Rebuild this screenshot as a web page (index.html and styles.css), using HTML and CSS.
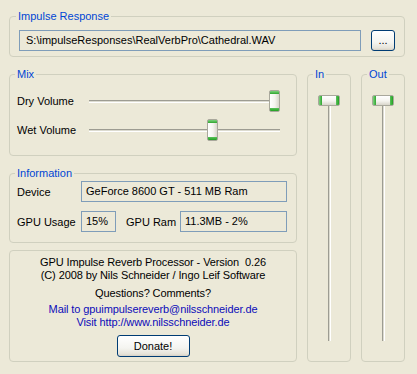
FILE: index.html
```html
<!DOCTYPE html>
<html lang="en">
<head>
    <meta charset="UTF-8">
    <title>GPU Impulse Reverb</title>
    <link rel="stylesheet" href="styles.css">
</head>
<body>
    <div class="window">
        <fieldset class="group ir">
            <legend>Impulse Response</legend>
            <div class="ir-row">
                <div class="field path">S:\impulseResponses\RealVerbPro\Cathedral.WAV</div>
                <button class="btn browse">...</button>
            </div>
        </fieldset>

        <div class="main">
            <div class="left">
                <fieldset class="group mix">
                    <legend>Mix</legend>
                    <div class="slider-row">
                        <span class="slider-label">Dry Volume</span>
                        <div class="hslider">
                            <div class="htrack"></div>
                            <div class="hthumb" style="left: 180px"></div>
                        </div>
                    </div>
                    <div class="slider-row">
                        <span class="slider-label">Wet Volume</span>
                        <div class="hslider">
                            <div class="htrack"></div>
                            <div class="hthumb" style="left: 118px"></div>
                        </div>
                    </div>
                </fieldset>

                <fieldset class="group info">
                    <legend>Information</legend>
                    <div class="info-row">
                        <span class="info-label">Device</span>
                        <div class="field device">GeForce 8600 GT - 511 MB Ram</div>
                    </div>
                    <div class="info-row">
                        <span class="info-label">GPU Usage</span>
                        <div class="field usage">15%</div>
                        <span class="ram-label">GPU Ram</span>
                        <div class="field ram">11.3MB - 2%</div>
                    </div>
                </fieldset>

                <div class="group about">
                    <div class="line">GPU Impulse Reverb Processor - Version&nbsp; 0.26</div>
                    <div class="line">(C) 2008 by Nils Schneider / Ingo Leif Software</div>
                    <div class="line questions">Questions? Comments?</div>
                    <div class="line link mail">Mail to gpuimpulsereverb@nilsschneider.de</div>
                    <div class="line link">Visit http://www.nilsschneider.de</div>
                    <button class="btn donate">Donate!</button>
                </div>
            </div>

            <fieldset class="group meter">
                <legend>In</legend>
                <div class="vslider">
                    <div class="vtrack"></div>
                    <div class="vthumb" style="top: 0px"></div>
                </div>
            </fieldset>

            <fieldset class="group meter">
                <legend>Out</legend>
                <div class="vslider">
                    <div class="vtrack"></div>
                    <div class="vthumb" style="top: 0px"></div>
                </div>
            </fieldset>
        </div>
    </div>
</body>
</html>
```

FILE: styles.css
```css
body {
    margin: 0;
    font-family: Tahoma, "Liberation Sans", Arial, sans-serif;
    font-size: 11px;
    color: #000;
    background-color: #ece9d8;
}
.window {
    width: 417px;
    height: 374px;
    box-sizing: border-box;
    padding: 10px 0 0 9px;
    background-color: #ece9d8;
}
.group {
    margin: 0;
    border: 1px solid #d0d0bf;
    border-radius: 4px;
    box-sizing: border-box;
    min-width: 0;
}
.group legend {
    color: #0046d5;
    line-height: 13px;
    padding: 0 2px;
    margin-left: -2px;
}
.ir {
    width: 396px;
    padding: 7px 9px 5px 8px;
}
.ir-row {
    display: flex;
    gap: 10px;
}
.field {
    height: 21px;
    box-sizing: border-box;
    border: 1px solid #7f9db9;
    padding: 0 4px;
    line-height: 19px;
    white-space: nowrap;
    overflow: hidden;
}
.path {
    flex: 1;
    margin-left: 1px;
    padding-left: 6px;
}
.btn {
    font-family: inherit;
    font-size: 11px;
    color: #000;
    border: 1px solid #003c74;
    border-radius: 3px;
    background: linear-gradient(to bottom, #ffffff, #f4f4f0 60%, #e6e3d9 90%, #d6d0c5);
    padding: 0;
    box-sizing: border-box;
}
.browse {
    width: 24px;
    height: 21px;
    line-height: 17px;
}
.main {
    display: flex;
    margin-top: 11px;
    gap: 10px;
}
.left {
    width: 288px;
    display: flex;
    flex-direction: column;
}
.mix {
    padding: 9px 16px 14px 7px;
}
.slider-row {
    display: flex;
    align-items: center;
    height: 22px;
}
.slider-row + .slider-row {
    margin-top: 7px;
}
.slider-label {
    width: 72px;
}
.hslider {
    position: relative;
    width: 191px;
    height: 22px;
    display: flex;
    align-items: center;
}
.htrack {
    width: 100%;
    height: 1px;
    background-color: #dcdbd0;
    border-top: 1px solid #9d9c92;
    border-bottom: 1px solid #ffffff;
}
.hthumb {
    position: absolute;
    top: 0;
    width: 11px;
    height: 22px;
    box-sizing: border-box;
    border: 1px solid #a9a89c;
    border-radius: 2px;
    background:
        linear-gradient(to bottom, #7dd37d 0, #2fa52f 3px, transparent 3px, transparent 17px, #5cc25c 17px, #21a121 20px),
        linear-gradient(to right, #ffffff, #f5f4ef 55%, #d8d6cb);
}
.info {
    margin-top: 11px;
    padding: 1px 8px 10px 7px;
}
.info-row {
    display: flex;
    align-items: center;
}
.info-row + .info-row {
    margin-top: 9px;
}
.info-label {
    width: 64px;
}
.device {
    width: 206px;
}
.usage {
    width: 35px;
}
.ram-label {
    margin-left: 10px;
    width: 54px;
}
.ram {
    width: 107px;
}
.about {
    margin-top: 7px;
    padding: 5px 0 4px 0;
    display: flex;
    flex-direction: column;
    align-items: center;
    letter-spacing: -0.1px;
}
.line {
    line-height: 13px;
    white-space: nowrap;
}
.questions {
    margin-top: 5px;
}
.mail {
    margin-top: 3px;
}
.link {
    color: #0c0cb8;
}
.donate {
    margin-top: 6px;
    width: 73px;
    height: 22px;
    line-height: 18px;
    letter-spacing: 0;
}
.meter {
    width: 44px;
    padding: 14px 0 17px 0;
    display: flex;
    flex-direction: column;
    align-items: center;
}
.meter legend {
    margin-left: 5px;
}
.vslider {
    position: relative;
    width: 22px;
    height: 246px;
    display: flex;
    justify-content: center;
}
.vtrack {
    width: 1px;
    height: 100%;
    background-color: #dcdbd0;
    border-left: 1px solid #9d9c92;
    border-right: 1px solid #ffffff;
}
.vthumb {
    position: absolute;
    left: 0;
    width: 22px;
    height: 11px;
    box-sizing: border-box;
    border: 1px solid #a9a89c;
    border-radius: 2px;
    background:
        linear-gradient(to right, #7dd37d 0, #2fa52f 3px, transparent 3px, transparent 17px, #5cc25c 17px, #21a121 20px),
        linear-gradient(to bottom, #ffffff, #f5f4ef 55%, #d8d6cb);
}
```
